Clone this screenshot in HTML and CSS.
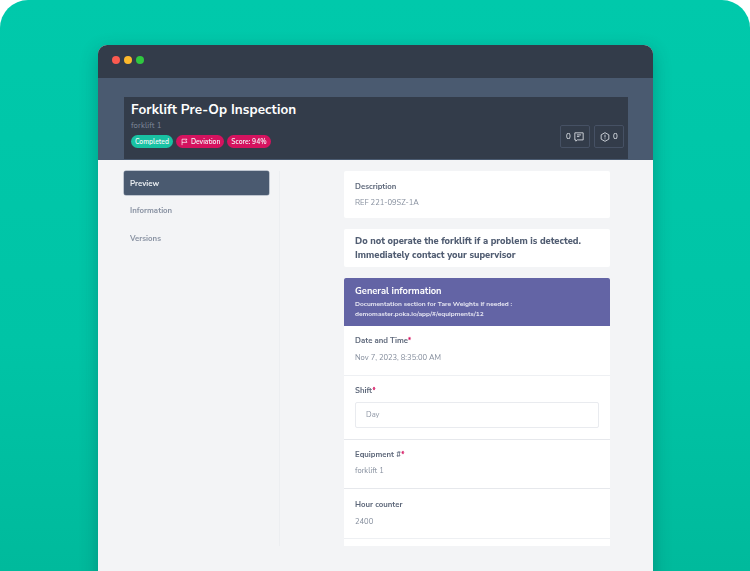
FILE: index.html
```html
<!DOCTYPE html>
<html lang="en">
<head>
<meta charset="utf-8">
<title>Forklift Pre-Op Inspection</title>
<link rel="stylesheet" href="styles.css">
</head>
<body>
<div class="stage">
  <div class="window">
    <div class="titlebar">
      <span class="dot dot-red"></span><span class="dot dot-yellow"></span><span class="dot dot-green"></span>
    </div>
    <div class="band">
      <header class="hero">
        <div class="hero-text">
          <h1>Forklift Pre-Op Inspection</h1>
          <div class="sub">forklift 1</div>
          <div class="pills">
            <span class="pill pill-teal">Completed</span>
            <span class="pill pill-pink pill-flag">
              <svg class="flag" viewBox="0 0 10 10" width="7" height="8"><path d="M1.500 9.500V1h7L7 3.200 8.500 5.500h-7" fill="none" stroke="#fff" stroke-width="1"/></svg>
              Deviation</span>
            <span class="pill pill-pink">Score: 94%</span>
          </div>
        </div>
        <div class="counters">
          <div class="counter">0
            <svg viewBox="0 0 12 12" width="10" height="10"><path d="M1 1h10v8.500H4L2.200 11V9.500H1z" fill="none" stroke="#e2e6ec" stroke-width="1"/><path d="M3.500 3.500h5M3.500 5.500h3" stroke="#e2e6ec" stroke-width="1"/></svg>
          </div>
          <div class="counter">
            <svg viewBox="0 0 12 12" width="10" height="10"><path d="M6 .8l4.600 2.600v5.200L6 11.200 1.400 8.600V3.400z" fill="none" stroke="#e2e6ec" stroke-width="1"/><path d="M6 3.200v3.400M6 7.700v1" stroke="#e2e6ec" stroke-width="1"/></svg>
            0</div>
        </div>
      </header>
    </div>
    <div class="body">
      <nav class="side">
        <a class="nav-item nav-active">Preview</a>
        <a class="nav-item">Information</a>
        <a class="nav-item">Versions</a>
      </nav>
      <main class="main">
        <section class="card card-desc">
          <div class="label">Description</div>
          <div class="value">REF 221-09SZ-1A</div>
        </section>
        <section class="card card-note">Do not operate the forklift if a problem is detected. Immediately contact your supervisor</section>
        <section class="form">
          <div class="form-head">
            <h2>General information</h2>
            <p>Documentation section for Tare Weights if needed : demomaster.poka.io/app/#/equipments/12</p>
          </div>
          <div class="row row-date">
            <div class="label">Date and Time<span class="req">*</span></div>
            <div class="value">Nov 7, 2023, 8:35:00 AM</div>
          </div>
          <div class="row row-shift">
            <div class="label">Shift<span class="req">*</span></div>
            <div class="input">Day</div>
          </div>
          <div class="row row-equip">
            <div class="label">Equipment #<span class="req">*</span></div>
            <div class="value">forklift 1</div>
          </div>
          <div class="row row-hour">
            <div class="label">Hour counter</div>
            <div class="value">2400</div>
          </div>
          <div class="row-tail"></div>
        </section>
      </main>
    </div>
  </div>
</div>
</body>
</html>
```
FILE: styles.css
```css
* { box-sizing: border-box; }
html, body { margin: 0; background: #fff; }
body { font-family: "Nunito Sans", "Lato", "Noto Sans", sans-serif; }
.stage {
  width: 750px;
  height: 571px;
  overflow: hidden;
  border-radius: 28px 28px 0 0;
  background: linear-gradient(180deg, #00c9ab 0%, #00c4a6 60%, #00ba9c 100%);
  padding: 45px 97px 0 98px;
}
.window {
  height: 540px;
  border-radius: 9px 9px 0 0;
  overflow: hidden;
  background: #f3f4f6;
  box-shadow: 0 6px 18px rgba(0, 60, 60, .32);
  display: flex;
  flex-direction: column;
  filter: blur(.4px);
}
.titlebar {
  height: 33px;
  background: #333c4a;
  display: flex;
  align-items: center;
  gap: 4px;
  padding: 0 0 3px 14px;
  flex: none;
}
.dot { width: 8px; height: 8px; border-radius: 50%; }
.dot-red { background: #fb5a50; }
.dot-yellow { background: #fdb92c; }
.dot-green { background: #2fc840; }
.band {
  height: 82px;
  background: #4a5a70;
  padding: 19px 25px 1px 26px;
  flex: none;
}
.hero {
  height: 62px;
  background: #333c4a;
  display: flex;
  justify-content: space-between;
  align-items: flex-end;
  padding: 0 4px 11px 7px;
}
h1 {
  margin: 0;
  font-size: 13.5px;
  line-height: 18px;
  font-weight: 700;
  color: #fff;
  letter-spacing: .1px;
  white-space: nowrap;
}
.sub { font-size: 7.8px; line-height: 12px; margin-top: 1px; color: #7f8a9a; letter-spacing: .1px; }
.pills { display: flex; gap: 3px; margin-top: 3px; }
.pill {
  height: 13px;
  border-radius: 7px;
  padding: 0 4px;
  font-size: 6.8px;
  line-height: 13px;
  font-weight: 600;
  color: #f2f6f8;
  white-space: nowrap;
}
.pill-teal { background: #19c2a3; }
.pill-pink { background: #d5135f; }
.pill-flag { display: flex; align-items: center; gap: 3px; padding-left: 5px; }
.counters { display: flex; gap: 4px; }
.counter {
  width: 30px;
  height: 23px;
  border: 1px solid #465164;
  border-radius: 2px;
  display: flex;
  align-items: center;
  justify-content: center;
  gap: 3px;
  font-size: 8px;
  color: #dfe3e9;
}
.body { flex: 1; display: flex; min-height: 0; padding: 11px 43px 0 26px; }
.side {
  width: 156px;
  height: 375px;
  border-right: 1px solid #eceef1;
  flex: none;
}
.nav-item {
  display: block;
  width: 145px;
  height: 24px;
  margin-bottom: 3.500px;
  padding-left: 6px;
  font-size: 7.8px;
  line-height: 25px;
  font-weight: 700;
  color: #8a93a3;
}
.nav-active { background: #4a5a70; color: #e9edf1; border-radius: 2px; box-shadow: 0 0 0 .5px #8b98a9; margin-bottom: 3px; }
.main { width: 266px; margin-left: 64px; height: 375px; overflow: hidden; flex: none; }
.card { background: #fff; border-radius: 2px; padding: 0 11px; }
.card-desc { height: 47px; padding-top: 10px; margin-bottom: 11px; }
.card-note {
  height: 38px;
  padding-top: 6px;
  margin-bottom: 11px;
  font-size: 9.300px;
  line-height: 13.500px;
  font-weight: 800;
  color: #515d72;
}
.label { font-size: 7.800px; line-height: 12px; font-weight: 700; color: #5f697b; }
.value { font-size: 7.600px; line-height: 12px; margin-top: 4px; color: #858e9d; }
.req { color: #d5135f; }
.form { background: #fff; height: 268px; }
.form-head {
  height: 48px;
  background: #6364a5;
  border-radius: 2px 2px 0 0;
  padding: 6px 11px 0;
  color: #fff;
}
h2 { margin: 0; font-size: 9.300px; line-height: 14px; font-weight: 700; }
.form-head p { margin: 1px 0 0; font-size: 6.600px; line-height: 10px; font-weight: 700; color: #e6e6f2; }
.row { padding: 9px 11px 0; border-bottom: 1px solid #eef0f3; }
.row-date { height: 50px; }
.row-shift { height: 64px; border-bottom-color: #e6e8ec; }
.row-equip { height: 49px; border-bottom-color: #e6e8ec; }
.row-hour { height: 50px; padding-top: 10px; }
.row-date .value, .row-hour .value { margin-top: 5px; }
.input {
  height: 26px;
  margin-top: 5px;
  border: 1px solid #e9ebef;
  border-radius: 2px;
  padding-left: 10px;
  font-size: 7.600px;
  line-height: 24px;
  color: #8f97a5;
}
```
